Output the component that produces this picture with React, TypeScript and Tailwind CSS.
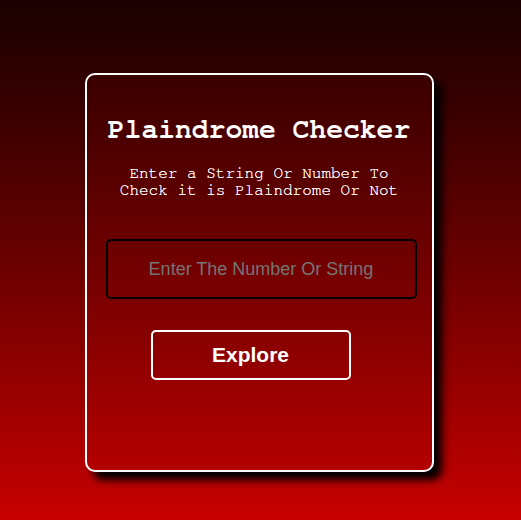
import { useState } from 'react';

export default function App() {
  const [value, setValue] = useState('');

  return (
    <div className="min-h-[520px] w-full bg-gradient-to-b from-[#1a0000] to-[#c80000] flex justify-center pt-[73px] pr-[3px]">
      <div className="w-[349px] h-[399px] rounded-[10px] border-2 border-white bg-gradient-to-b from-[#3a0000] to-[#b40000] shadow-[8px_8px_8px_#000] flex flex-col items-start">
        <h1 className="mt-[39px] w-full text-center text-[28px] leading-[32px] font-bold text-white font-['FreeMono','Nimbus_Mono_PS','Courier_New',Courier,monospace]">
          Plaindrome Checker
        </h1>
        <p className="mt-[19px] w-full text-[16px] leading-[17px] text-white text-center [text-shadow:0_0_0.4px_#fff] font-['FreeMono','Nimbus_Mono_PS','Courier_New',Courier,monospace]">
          Enter a String Or Number To
          <br />
          Check it is Plaindrome Or Not
        </p>
        <input
          value={value}
          onChange={(e) => setValue(e.target.value)}
          placeholder="Enter The Number Or String"
          className="mt-[40px] ml-[19px] w-[311px] h-[60px] rounded-[5px] border-2 border-black bg-transparent text-center text-[18px] text-white placeholder:text-[#757575] outline-none font-['Liberation_Sans',Arial,sans-serif]"
        />
        <button
          type="button"
          className="mt-[31px] ml-[64px] w-[200px] h-[50px] rounded-[5px] border-2 border-white bg-transparent text-white text-[21px] font-bold font-['Liberation_Sans',Arial,sans-serif]"
        >
          Explore
        </button>
      </div>
    </div>
  );
}
